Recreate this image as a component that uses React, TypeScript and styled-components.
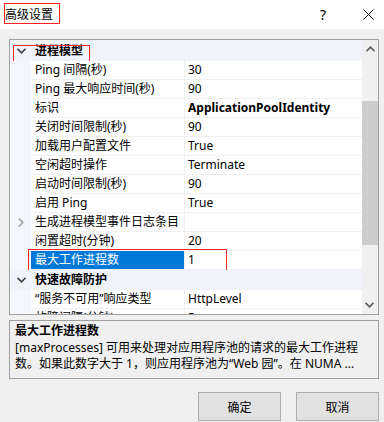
import React from 'react';
import styled, { createGlobalStyle } from 'styled-components';

const GlobalStyle = createGlobalStyle`
  html, body {
    margin: 0;
    padding: 0;
    background: #f0f0f0;
  }
  body {
    font-family: "Noto Sans", "Noto Sans CJK SC", sans-serif;
    font-size: 12px;
    color: #000;
  }
`;

const Window = styled.div`
  width: 384px;
  height: 422px;
  background: #f0f0f0;
  display: flex;
  flex-direction: column;
  overflow: hidden;
`;

const TitleBar = styled.div`
  height: 29px;
  background: #fff;
  display: flex;
  align-items: flex-start;
`;

const Title = styled.span`
  margin: 3px 0 0 4px;
  height: 19px;
  padding: 0 6px 0 0;
  border: 1px solid #ff2020;
  line-height: 19px;
  font-size: 12px;
  font-family: "Noto Sans CJK SC", sans-serif;
`;

const TitleButtons = styled.div`
  margin-left: auto;
  display: flex;
  align-items: center;
  gap: 30px;
  height: 28px;
  padding-right: 10px;
`;

const HelpMark = styled.span`
  width: 20px;
  text-align: center;
  font-size: 14px;
  font-family: "Noto Sans", sans-serif;
`;

const CloseBox = styled.span`
  display: flex;
  align-items: center;
`;

const Body = styled.div`
  padding: 10px 5px 0 9px;
  display: flex;
  flex-direction: column;
`;

const Grid = styled.div`
  height: 274px;
  border: 1px solid #a0a0a0;
  background: #fff;
  display: flex;
`;

const Rows = styled.div`
  flex: 1;
  overflow: hidden;
  display: flex;
  flex-direction: column;
`;

const ItemRow = styled.div`
  flex: none;
  height: 19px;
  display: grid;
  grid-template-columns: 21px 154px 1fr;
  position: relative;
`;

const Margin = styled.div<{ $plain?: boolean }>`
  background: ${(p) => (p.$plain ? 'transparent' : '#f3f6fb')};
  display: flex;
  align-items: center;
  justify-content: center;
  padding-left: 1px;
`;

const LabelCell = styled.div<{ $selected?: boolean }>`
  padding-left: 4px;
  line-height: 18px;
  white-space: nowrap;
  overflow: hidden;
  border-right: 1px solid #f0f0f0;
  border-bottom: 1px solid #f0f0f0;
  background: ${(p) => (p.$selected ? '#0078d7' : '#fff')};
  color: ${(p) => (p.$selected ? '#fff' : '#000')};
`;

const ValueCell = styled.div<{ $bold?: boolean }>`
  padding-left: 3px;
  line-height: 18px;
  white-space: nowrap;
  overflow: hidden;
  border-bottom: 1px solid #f0f0f0;
  font-weight: ${(p) => (p.$bold ? 700 : 400)};
`;

const CategoryRow = styled.div<{ $first?: boolean }>`
  flex: none;
  height: ${(p) => (p.$first ? 21 : 20)}px;
  background: #f0f4fa;
  display: grid;
  grid-template-columns: 21px 1fr;
  align-items: center;
  position: relative;
  font-weight: 700;
`;

const CategoryLabel = styled.div`
  padding-left: 4px;
  line-height: 20px;
`;

const Mark = styled.div<{ $left: number; $top: number; $w: number; $h: number }>`
  position: absolute;
  left: ${(p) => p.$left}px;
  top: ${(p) => p.$top}px;
  width: ${(p) => p.$w}px;
  height: ${(p) => p.$h}px;
  border: 1px solid #ff2a2a;
  box-sizing: border-box;
  pointer-events: none;
`;

const ScrollBar = styled.div`
  width: 16px;
  background: #f0f0f0;
  display: flex;
  flex-direction: column;
`;

const ArrowBtn = styled.div<{ $down?: boolean }>`
  height: 17px;
  display: flex;
  align-items: center;
  justify-content: center;
  transform: ${(p) => (p.$down ? 'rotate(180deg)' : 'none')};
`;

const Track = styled.div`
  flex: 1;
  display: flex;
  flex-direction: column;
`;

const Thumb = styled.div`
  margin-top: 44px;
  height: 144px;
  background: #cdcdcd;
`;

const Description = styled.div`
  margin-top: 5px;
  height: 56px;
  border: 1px solid #a0a0a0;
  padding: 1px 0 0 5px;
  overflow: hidden;
  white-space: nowrap;
`;

const DescTitle = styled.div`
  font-weight: 700;
  line-height: 18px;
`;

const DescLine = styled.div`
  line-height: 16px;
`;

const Buttons = styled.div`
  margin-top: 13px;
  display: flex;
  justify-content: flex-end;
  gap: 15px;
`;

const Button = styled.button`
  width: 83px;
  height: 29px;
  background: #e1e1e1;
  border: 1px solid #adadad;
  font-family: "Noto Sans CJK SC", sans-serif;
  font-size: 12px;
  color: #000;
  padding: 0;
`;

type Row =
  | { kind: 'cat'; label: string; marked?: boolean }
  | {
      kind: 'item';
      label: string;
      value: string;
      bold?: boolean;
      collapsed?: boolean;
      selected?: boolean;
    };

const rows: Row[] = [
  { kind: 'cat', label: '进程模型', marked: true },
  { kind: 'item', label: 'Ping 间隔(秒)', value: '30' },
  { kind: 'item', label: 'Ping 最大响应时间(秒)', value: '90' },
  { kind: 'item', label: '标识', value: 'ApplicationPoolIdentity', bold: true },
  { kind: 'item', label: '关闭时间限制(秒)', value: '90' },
  { kind: 'item', label: '加载用户配置文件', value: 'True' },
  { kind: 'item', label: '空闲超时操作', value: 'Terminate' },
  { kind: 'item', label: '启动时间限制(秒)', value: '90' },
  { kind: 'item', label: '启用 Ping', value: 'True' },
  { kind: 'item', label: '生成进程模型事件日志条目', value: '', collapsed: true },
  { kind: 'item', label: '闲置超时(分钟)', value: '20' },
  { kind: 'item', label: '最大工作进程数', value: '1', selected: true },
  { kind: 'cat', label: '快速故障防护' },
  { kind: 'item', label: '“服务不可用”响应类型', value: 'HttpLevel' },
  { kind: 'item', label: '故障间隔(分钟)', value: '5' },
];

const ChevronDown = () => (
  <svg width="9" height="6" viewBox="0 0 9 6">
    <polyline points="0.5,0.8 4.5,4.8 8.5,0.8" fill="none" stroke="#444" strokeWidth="1.6" />
  </svg>
);

const ChevronRight = () => (
  <svg width="6" height="9" viewBox="0 0 6 9">
    <polyline points="0.8,0.5 4.8,4.5 0.8,8.5" fill="none" stroke="#9a9a9a" strokeWidth="1.4" />
  </svg>
);

const ChevronUp = () => (
  <svg width="9" height="6" viewBox="0 0 9 6">
    <polyline points="0.5,5.2 4.5,1.2 8.5,5.2" fill="none" stroke="#606060" strokeWidth="1.8" />
  </svg>
);

export default function App() {
  return (
    <>
      <GlobalStyle />
      <Window>
        <TitleBar>
          <Title>高级设置</Title>
          <TitleButtons>
            <HelpMark>?</HelpMark>
            <CloseBox>
              <svg width="11" height="11" viewBox="0 0 11 11">
                <path d="M0.5 0.5 L10.5 10.5 M10.5 0.5 L0.5 10.5" stroke="#000" strokeWidth="1" />
              </svg>
            </CloseBox>
          </TitleButtons>
        </TitleBar>

        <Body>
          <Grid>
            <Rows>
              {rows.map((row, i) =>
                row.kind === 'cat' ? (
                  <CategoryRow key={i} $first={i === 0}>
                    <Margin $plain>
                      <ChevronDown />
                    </Margin>
                    <CategoryLabel>{row.label}</CategoryLabel>
                    {row.marked && <Mark $left={3} $top={5} $w={77} $h={17} />}
                  </CategoryRow>
                ) : (
                  <ItemRow key={i}>
                    <Margin>{row.collapsed && <ChevronRight />}</Margin>
                    <LabelCell $selected={row.selected}>{row.label}</LabelCell>
                    <ValueCell $bold={row.bold}>{row.value}</ValueCell>
                    {row.selected && <Mark $left={18} $top={-2} $w={199} $h={22} />}
                  </ItemRow>
                )
              )}
            </Rows>
            <ScrollBar>
              <ArrowBtn>
                <ChevronUp />
              </ArrowBtn>
              <Track>
                <Thumb />
              </Track>
              <ArrowBtn $down>
                <ChevronUp />
              </ArrowBtn>
            </ScrollBar>
          </Grid>

          <Description>
            <DescTitle>最大工作进程数</DescTitle>
            <DescLine>[maxProcesses] 可用来处理对应用程序池的请求的最大工作进程</DescLine>
            <DescLine>数。如果此数字大于 1，则应用程序池为“Web 园”。在 NUMA ...</DescLine>
          </Description>

          <Buttons>
            <Button>确定</Button>
            <Button>取消</Button>
          </Buttons>
        </Body>
      </Window>
    </>
  );
}
